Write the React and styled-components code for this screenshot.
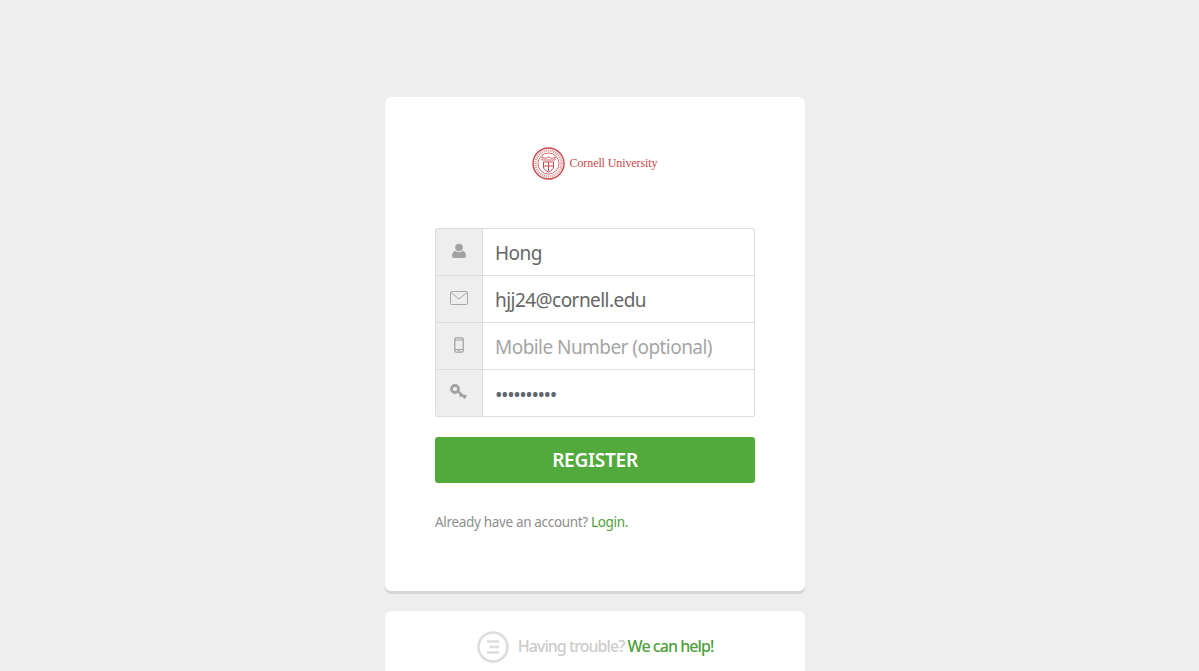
import React from 'react'
import styled, { createGlobalStyle } from 'styled-components'

const GlobalStyle = createGlobalStyle`
  html, body {
    margin: 0;
    padding: 0;
    height: 671px;
    overflow: hidden;
    background: #eeeeee;
    font-family: "Noto Sans", "Open Sans", sans-serif;
  }
`

const Page = styled.div`
  display: flex;
  flex-direction: column;
  align-items: center;
  padding: 97px 9px 0 0;
`

const Card = styled.div`
  box-sizing: border-box;
  width: 420px;
  background: #fff;
  border-radius: 6px;
  box-shadow: 0 3px 0 #d5d5d5;
  padding: 50px 50px 0;
  height: 494px;
`

const Logo = styled.div`
  display: flex;
  align-items: center;
  justify-content: center;
  gap: 5px;
  height: 33px;
  margin: 0 1px 48px 0;
`

const LogoName = styled.span`
  font-family: "Liberation Serif", serif;
  font-size: 12px;
  letter-spacing: -0.1px;
  color: #c8474c;
`

const Fields = styled.div`
  border: 1px solid #dddddd;
  border-radius: 2px;
`

const Row = styled.div`
  display: flex;
  height: 46px;
  border-top: ${p => (p.$first ? 'none' : '1px solid #dddddd')};
`

const IconCell = styled.div`
  flex: 0 0 47px;
  display: flex;
  align-items: center;
  justify-content: center;
  background: #eeeeee;
  border-right: 1px solid #dddddd;
  padding-bottom: 3px;
  box-sizing: border-box;
`

const Value = styled.div`
  flex: 1;
  display: flex;
  align-items: center;
  padding: 1px 0 0 12px;
  font-size: 19px;
  letter-spacing: -0.55px;
  color: ${p => (p.$placeholder ? '#a5a5a5' : '#666666')};
`

const Dots = styled(Value)`
  font-size: 20px;
  letter-spacing: -1.45px;
  padding-top: 3px;
  color: #5f686f;
`

const Button = styled.button`
  display: block;
  width: 320px;
  height: 46px;
  margin-top: 20px;
  border: none;
  border-radius: 3px;
  background: #52aa3d;
  color: #fff;
  font-family: inherit;
  font-size: 19px;
  font-weight: 600;
  letter-spacing: -0.25px;
`

const Note = styled.p`
  margin: 29px 0 0;
  font-size: 13.5px;
  line-height: 20px;
  letter-spacing: -0.33px;
  color: #8e8e8e;
`

const GreenLink = styled.a`
  color: #4d9f3a;
`

const HelpCard = styled.div`
  width: 420px;
  height: 80px;
  margin-top: 20px;
  box-sizing: border-box;
  padding-top: 20px;
  background: #fff;
  border-radius: 6px;
  display: flex;
  justify-content: center;
  align-items: flex-start;
  gap: 9px;
`

const HelpText = styled.span`
  font-size: 16px;
  line-height: 30px;
  font-weight: 500;
  letter-spacing: -0.95px;
  color: #cccccc;
`

const Seal = () => (
  <svg width="33" height="33" viewBox="0 0 33 33" fill="none" stroke="#c8474c">
    <circle cx="16.5" cy="16.5" r="15.5" strokeWidth="1.4" />
    <circle cx="16.5" cy="16.5" r="10.5" strokeWidth="0.8" />
    <circle cx="16.5" cy="16.5" r="13" strokeWidth="2.6" strokeDasharray="1 1" opacity="0.6" />
    <path d="M10 10l3 1.500 3.500-1.500 3.500 1.500 3-1.500v3H10z" strokeWidth="1" opacity="0.8" />
    <path d="M11.500 15h10v5c0 2-2.500 4-5 5-2.500-1-5-3-5-5zM11.500 19h10M16.500 15v9" strokeWidth="1" />
  </svg>
)

const UserIcon = () => (
  <svg width="16" height="16" viewBox="0 0 16 16" fill="#a2a2a2">
    <circle cx="8" cy="4.500" r="3.800" />
    <path d="M1 13c0-3 1.500-5 3.500-5 1 .800 2.200 1.200 3.500 1.200S10.500 8.800 11.500 8C13.500 8 15 10 15 13c0 1.200-.8 2-2 2H3c-1.200 0-2-.8-2-2z" />
  </svg>
)

const MailIcon = () => (
  <svg width="18" height="14" viewBox="0 0 18 14" fill="none" stroke="#a8a8a8" strokeWidth="1">
    <rect x="0.500" y="0.500" width="17" height="13" rx="1" />
    <path d="M1 1.500l8 6.500 8-6.500" />
  </svg>
)

const PhoneIcon = () => (
  <svg width="10" height="16" viewBox="0 0 10 16" fill="none" stroke="#a2a2a2">
    <rect x="0.800" y="0.800" width="8.400" height="14.400" rx="1.500" strokeWidth="1.300" />
    <path d="M1 3h8M1 12.500h8" strokeWidth="1" />
    <circle cx="5" cy="13.800" r="0.500" fill="#a2a2a2" />
  </svg>
)

const KeyIcon = () => (
  <svg width="18" height="16" viewBox="0 0 18 16" fill="none" stroke="#a2a2a2">
    <circle cx="5" cy="5" r="3.500" strokeWidth="2.800" />
    <path d="M8 7.500l7.500 6.500M11.500 10.500l-1.500 2M14.500 13l1.500-2" strokeWidth="2.400" />
  </svg>
)

const HelpIcon = () => (
  <svg width="32" height="32" viewBox="0 0 32 32" fill="none" stroke="#dddddd">
    <circle cx="16" cy="16" r="14.500" strokeWidth="2.600" />
    <path d="M10 10.500h12M12.500 16h9.500M10 21.500h12" strokeWidth="2.600" />
  </svg>
)

export default function App() {
  return (
    <Page>
      <GlobalStyle />
      <Card>
        <Logo>
          <Seal />
          <LogoName>Cornell University</LogoName>
        </Logo>
        <Fields>
          <Row $first>
            <IconCell><UserIcon /></IconCell>
            <Value>Hong</Value>
          </Row>
          <Row>
            <IconCell><MailIcon /></IconCell>
            <Value>hjj24@cornell.edu</Value>
          </Row>
          <Row>
            <IconCell><PhoneIcon /></IconCell>
            <Value $placeholder>Mobile Number (optional)</Value>
          </Row>
          <Row>
            <IconCell><KeyIcon /></IconCell>
            <Dots>••••••••••</Dots>
          </Row>
        </Fields>
        <Button>REGISTER</Button>
        <Note>
          Already have an account? <GreenLink>Login.</GreenLink>
        </Note>
      </Card>
      <HelpCard>
        <HelpIcon />
        <HelpText>
          Having trouble? <GreenLink>We can help!</GreenLink>
        </HelpText>
      </HelpCard>
    </Page>
  )
}
